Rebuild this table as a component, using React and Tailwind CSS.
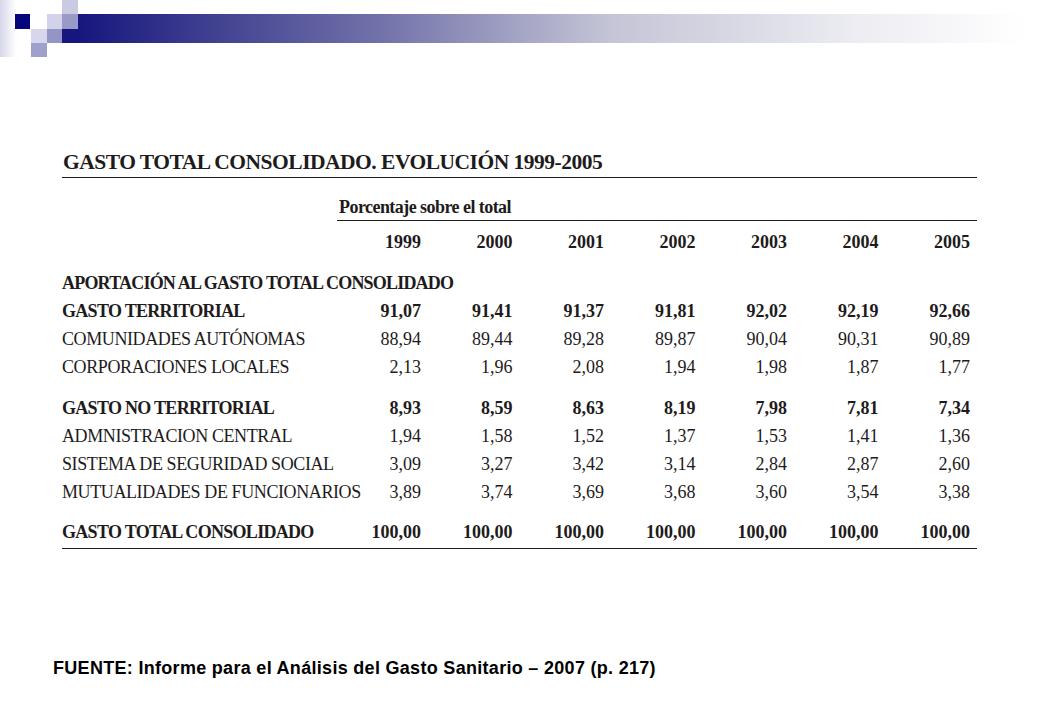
import React from 'react';

const years = ['1999', '2000', '2001', '2002', '2003', '2004', '2005'];

const groups = [
  [
    { label: 'GASTO TERRITORIAL', bold: true, values: ['91,07', '91,41', '91,37', '91,81', '92,02', '92,19', '92,66'] },
    { label: 'COMUNIDADES AUTÓNOMAS', values: ['88,94', '89,44', '89,28', '89,87', '90,04', '90,31', '90,89'] },
    { label: 'CORPORACIONES LOCALES', values: ['2,13', '1,96', '2,08', '1,94', '1,98', '1,87', '1,77'] },
  ],
  [
    { label: 'GASTO NO TERRITORIAL', bold: true, values: ['8,93', '8,59', '8,63', '8,19', '7,98', '7,81', '7,34'] },
    { label: 'ADMNISTRACION CENTRAL', values: ['1,94', '1,58', '1,52', '1,37', '1,53', '1,41', '1,36'] },
    { label: 'SISTEMA DE SEGURIDAD SOCIAL', values: ['3,09', '3,27', '3,42', '3,14', '2,84', '2,87', '2,60'] },
    { label: 'MUTUALIDADES DE FUNCIONARIOS', values: ['3,89', '3,74', '3,69', '3,68', '3,60', '3,54', '3,38'] },
  ],
];

const total = { label: 'GASTO TOTAL CONSOLIDADO', bold: true, values: ['100,00', '100,00', '100,00', '100,00', '100,00', '100,00', '100,00'] };

function Logo() {
  return (
    <svg width="78" height="57" viewBox="0 0 78 57" className="shrink-0">
      <defs>
        <linearGradient id="fade" x1="0" y1="0" x2="1" y2="0">
          <stop offset="0" stopColor="#d6d6ea" />
          <stop offset="1" stopColor="#ffffff" />
        </linearGradient>
      </defs>
      <rect x="0" y="0" width="16" height="57" fill="url(#fade)" />
      <rect x="15" y="14" width="15" height="15" fill="#06067c" />
      <rect x="62" y="0" width="16" height="14" fill="#cacae2" />
      <rect x="47" y="14" width="15" height="15" fill="#d2d2ea" />
      <rect x="62" y="14" width="16" height="15" fill="#9a9ac8" />
      <rect x="31" y="29" width="16" height="14" fill="#d6d6ec" />
      <rect x="47" y="29" width="15" height="14" fill="#9494c6" />
      <rect x="62" y="29" width="16" height="14" fill="#16167e" />
      <rect x="31" y="43" width="16" height="14" fill="#a0a0cc" />
    </svg>
  );
}

function Row({ row }) {
  return (
    <div className={`grid grid-cols-[267.5px_repeat(7,91.5px)] pr-[7px] h-[28px] items-center ${row.bold ? 'font-bold' : ''}`}>
      <div className={`whitespace-nowrap ${row.bold ? 'tracking-[-0.7px]' : 'tracking-[-0.4px]'}`}>{row.label}</div>
      {row.values.map((v, i) => (
        <div key={i} className="text-right">{v}</div>
      ))}
    </div>
  );
}

export default function App() {
  return (
    <div className="w-[1040px] h-[720px] bg-white text-[#1e1b1c] relative overflow-hidden">
      <div className="flex h-[57px]">
        <Logo />
        <div className="mt-[14px] h-[29px] w-[947px] bg-[linear-gradient(to_right,#16167e_0%,#3a3a8e_12%,#7272aa_32%,#c4c4d6_56%,#ececf2_82%,#ffffff_100%)]" />
      </div>

      <div className="ml-[62px] w-[915px] mt-[94px] font-['Liberation_Serif',serif]">
        <div className="border-b-[1.5px] border-[#1e1b1c] pb-[3px]">
          <div className="font-bold text-[21.5px] leading-[23px] tracking-[-0.5px] pl-px">GASTO TOTAL CONSOLIDADO. EVOLUCIÓN 1999-2005</div>
        </div>

        <div className="ml-[275px] mt-[19px] border-b-[1.5px] border-[#1e1b1c] pb-[3px]">
          <div className="font-bold text-[18px] leading-[20px] tracking-[-0.55px] pl-[2px]">Porcentaje sobre el total</div>
        </div>

        <div className="text-[18px] leading-none">
          <div className="grid grid-cols-[267.5px_repeat(7,91.5px)] pr-[7px] h-[28px] items-center mt-[7px] font-bold">
            <div />
            {years.map((y) => (
              <div key={y} className="text-right">{y}</div>
            ))}
          </div>

          <div className="h-[28px] flex items-center mt-[13px] font-bold tracking-[-0.8px] whitespace-nowrap">
            APORTACIÓN AL GASTO TOTAL CONSOLIDADO
          </div>

          {groups.map((g, gi) => (
            <div key={gi} className={gi > 0 ? 'mt-[13px]' : ''}>
              {g.map((row) => (
                <Row key={row.label} row={row} />
              ))}
            </div>
          ))}

          <div className="mt-[12px] border-b-[1.5px] border-[#1e1b1c] pb-[2px]">
            <Row row={total} />
          </div>
        </div>
      </div>

      <div className="absolute left-[53px] top-[658px] font-['Liberation_Sans',Arial,sans-serif] font-bold text-[18px] leading-[20px] tracking-[0.3px] text-black whitespace-nowrap">
        FUENTE: Informe para el Análisis del Gasto Sanitario – 2007 (p. 217)
      </div>
    </div>
  );
}
